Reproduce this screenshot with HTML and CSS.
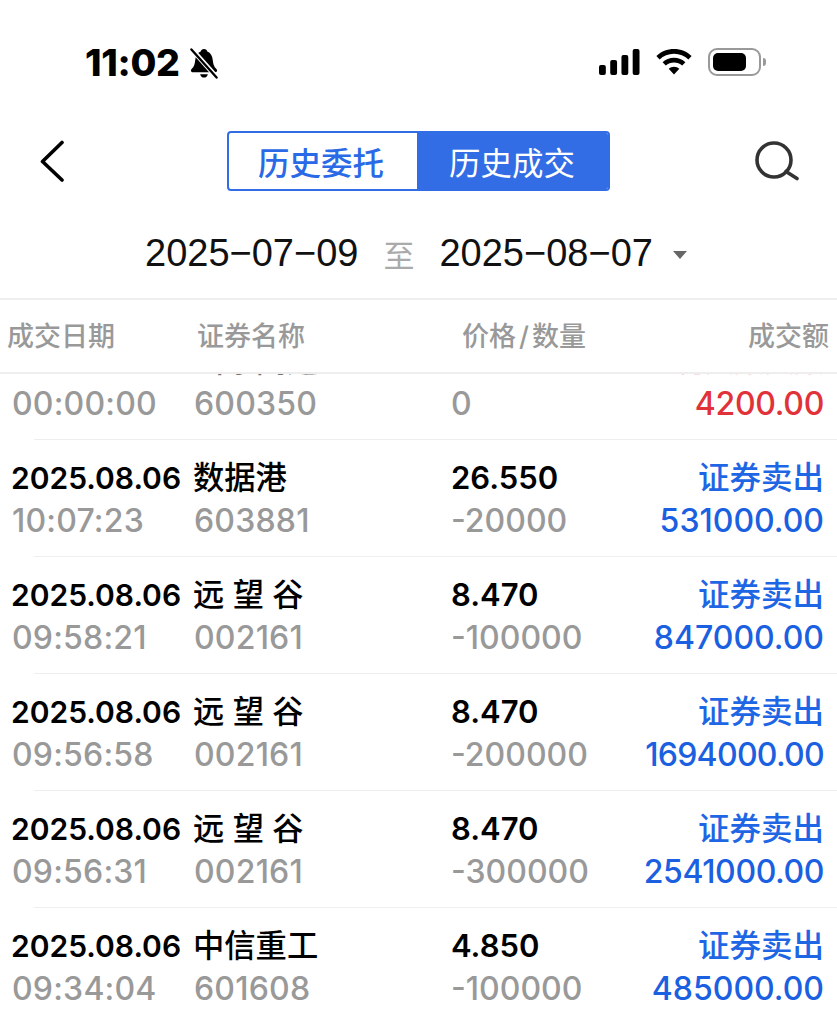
FILE: index.html
```html
<!DOCTYPE html>
<html lang="zh">
<head>
<meta charset="utf-8">
<title>历史成交</title>
<link rel="stylesheet" href="styles.css">
</head>
<body>
<div class="page">
  <div class="status">
    <div class="status-left">
      <span class="clock">11:02</span>
      <svg class="bell" viewBox="0 0 30 32"><path d="M15 1c2 0 3 1 3.400 2.600C22 5 23.500 8 24 12c.4 4 1 7 4 10 1 1 .6 3-1 3H3c-1.600 0-2-2-1-3 3-3 3.600-6 4-10 .5-4 2-7 5.600-8.400C12 2 13 1 15 1zM11 27h8c-.4 2-2 3.500-4 3.500S11.400 29 11 27z" fill="#000"/><path d="M3 2l25 28" stroke="#fff" stroke-width="5"/><path d="M2 1.500l26 29" stroke="#000" stroke-width="2.400" stroke-linecap="round"/></svg>
    </div>
    <div class="status-right">
      <svg class="signal" viewBox="0 0 42 26" preserveAspectRatio="none"><rect x="0" y="16" width="7" height="10" rx="2"/><rect x="11.500" y="11" width="7" height="15" rx="2"/><rect x="23" y="6" width="7" height="20" rx="2"/><rect x="34.500" y="0" width="7" height="26" rx="2"/></svg>
      <svg class="wifi" viewBox="0 0 36 26"><path d="M18 0c6.800 0 13 2.600 17.600 7l-3.200 3.400C28.600 6.900 23.600 4.800 18 4.800S7.400 6.900 3.600 10.400L.4 7C5 2.600 11.200 0 18 0zm0 8.800c4.400 0 8.400 1.700 11.400 4.400l-3.200 3.400c-2.200-2-5-3.200-8.200-3.200s-6 1.200-8.200 3.200l-3.200-3.400c3-2.700 7-4.400 11.400-4.400zm0 8.900c2 0 3.900.8 5.300 2L18 25.500l-5.300-5.800c1.400-1.200 3.300-2 5.300-2z"/></svg>
      <div class="battery"><div class="battery-fill"></div></div>
      <div class="battery-tip"></div>
    </div>
  </div>

  <div class="nav">
    <svg class="back" viewBox="0 0 26 42"><path d="M23 2.500 3.500 21.500 23 40" fill="none" stroke="#000" stroke-width="3.600" stroke-linecap="round" stroke-linejoin="round"/></svg>
    <div class="tabs">
      <div class="tab">历史委托</div>
      <div class="tab tab-on">历史成交</div>
    </div>
    <svg class="search" viewBox="0 0 44 40"><circle cx="19" cy="19" r="17" fill="none" stroke="#333" stroke-width="3.600"/><path d="M31 30.500l11 7" fill="none" stroke="#333" stroke-width="3.600" stroke-linecap="round"/></svg>
  </div>

  <div class="range">
    <span class="date">2025−07−09</span>
    <span class="to">至</span>
    <span class="date">2025−08−07</span>
    <span class="caret"></span>
  </div>

  <div class="head">
    <span class="c1">成交日期</span>
    <span class="c2">证券名称</span>
    <span class="c3">价格<i class="slash">/</i>数量</span>
    <span class="c4">成交额</span>
  </div>

  <div class="list">
    <div class="row row-cut">
      <div class="c1"><b>2025.08.06</b><em>00:00:00</em></div>
      <div class="c2"><b>山东高速</b><em>600350</em></div>
      <div class="c3"><b>0.000</b><em>0</em></div>
      <div class="c4 red"><b>红利入账入账</b><em>4200.00</em></div>
    </div>
    <div class="row">
      <div class="c1"><b>2025.08.06</b><em>10:07:23</em></div>
      <div class="c2"><b>数据港</b><em>603881</em></div>
      <div class="c3"><b>26.550</b><em>-20000</em></div>
      <div class="c4"><b>证券卖出</b><em>531000.00</em></div>
    </div>
    <div class="row">
      <div class="c1"><b>2025.08.06</b><em>09:58:21</em></div>
      <div class="c2"><b>远 望 谷</b><em>002161</em></div>
      <div class="c3"><b>8.470</b><em>-100000</em></div>
      <div class="c4"><b>证券卖出</b><em>847000.00</em></div>
    </div>
    <div class="row">
      <div class="c1"><b>2025.08.06</b><em>09:56:58</em></div>
      <div class="c2"><b>远 望 谷</b><em>002161</em></div>
      <div class="c3"><b>8.470</b><em>-200000</em></div>
      <div class="c4"><b>证券卖出</b><em class="tight">1694000.00</em></div>
    </div>
    <div class="row">
      <div class="c1"><b>2025.08.06</b><em>09:56:31</em></div>
      <div class="c2"><b>远 望 谷</b><em>002161</em></div>
      <div class="c3"><b>8.470</b><em>-300000</em></div>
      <div class="c4"><b>证券卖出</b><em class="snug">2541000.00</em></div>
    </div>
    <div class="row">
      <div class="c1"><b>2025.08.06</b><em>09:34:04</em></div>
      <div class="c2"><b>中信重工</b><em>601608</em></div>
      <div class="c3"><b>4.850</b><em>-100000</em></div>
      <div class="c4"><b>证券卖出</b><em>485000.00</em></div>
    </div>
  </div>
</div>
</body>
</html>
```

FILE: styles.css
```css
* { box-sizing: border-box; }
html, body { margin: 0; padding: 0; background: #fff; overflow: hidden; }
body { font-family: Inter, "Noto Sans CJK SC", sans-serif; }
.page { width: 837px; height: 1024px; display: flex; flex-direction: column; overflow: hidden; }

.status { height: 131px; flex: none; display: flex; justify-content: space-between; align-items: flex-start; padding: 41px 71px 0 85px; }
.status-left { display: flex; align-items: center; gap: 9px; height: 44px; }
.clock { font-size: 37.500px; font-weight: 800; color: #000; letter-spacing: -.3px; line-height: 44px; }
.bell { width: 30px; height: 31px; margin-top: 1px; }
.status-right { display: flex; align-items: center; height: 42px; }
.signal { width: 41px; height: 26px; fill: #000; }
.wifi { width: 36px; height: 26px; margin-left: 16px; fill: #000; }
.battery { width: 53px; height: 28px; margin-left: 16px; border: 2px solid #999; border-radius: 9px; padding: 3px; }
.battery-fill { width: 33px; height: 18px; background: #000; border-radius: 5px; }
.battery-tip { width: 3px; height: 8px; margin-left: 2px; background: #999; border-radius: 0 3px 3px 0; }

.nav { height: 60px; flex: none; display: flex; align-items: center; justify-content: space-between; padding: 0 38px 0 39px; }
.back { width: 26px; height: 42px; }
.search { width: 44px; height: 40px; }
.tabs { display: flex; width: 383px; height: 60px; border: 2px solid #326de6; border-radius: 4px; overflow: hidden; margin-left: 16px; }
.tab { flex: 1; display: flex; align-items: center; justify-content: center; padding-right: 3px; font-size: 31.500px; font-weight: 500; color: #2a6ae6; }
.tab-on { flex: none; width: 191px; padding-right: 0; background: #326de6; color: #fff; font-weight: 400; }

.range { height: 107px; flex: none; display: flex; align-items: center; padding: 18px 0 0 145px; font-family: "Liberation Sans", "Noto Sans CJK SC", sans-serif; }
.date { font-size: 38px; color: #111; }
.to { font-size: 31px; color: #aaa; margin: 0 25px; }
.caret { width: 0; height: 0; margin-left: 20px; margin-top: 3px; border: 7px solid transparent; border-top: 8px solid #666; border-bottom: 0; }

.head { height: 76px; flex: none; display: flex; align-items: center; padding: 0 8px 3px 7px; border-top: 2px solid #eee; border-bottom: 2px solid #eee; font-size: 27px; font-weight: 500; color: #999; }
.head .c1 { width: 190px; }
.head .c2 { width: 265px; }
.head .c3 { width: 200px; }
.head .c4 { flex: 1; text-align: right; }
.slash { font-style: normal; margin: 0 3px; }

.list { flex: 1; overflow: hidden; }
.row { height: 117px; display: flex; padding: 17px 13px 0 12px; position: relative; }
.row::after { content: ""; position: absolute; left: 34px; right: 0; bottom: 0; height: 1px; background: #eee; }
.row-cut { margin-top: -51px; }
.row-cut b { opacity: .55; }
.row b, .row em { display: block; font-style: normal; white-space: nowrap; }
.row b { height: 43px; line-height: 42px; font-size: 31px; font-weight: 600; color: #000; }
.row em { height: 41px; line-height: 42px; font-size: 32px; font-weight: 500; color: #999; }
.row .c1 { width: 182px; }
.row .c1 b { font-size: 30px; margin-left: -1px; }
.row .c1 em, .row .c2 em { letter-spacing: .2px; }
.row .c2 { width: 257px; }
.row .c2 b { margin-left: -1px; font-size: 31.300px; font-weight: 500; }
.row .c3 { width: 180px; }
.row .c4 { flex: 1; text-align: right; }
.row .c4 b { font-size: 31.500px; font-weight: 500; color: #1f66e5; }
.row .c4 em { color: #1a60e0; }
.row .c4 .tight { letter-spacing: -.7px; }
.row .c4 .snug { letter-spacing: -.4px; }
.row .red b { font-size: 30px; color: #f7c4c6; }
.row .red em { color: #e1323a; letter-spacing: -.3px; }
```
